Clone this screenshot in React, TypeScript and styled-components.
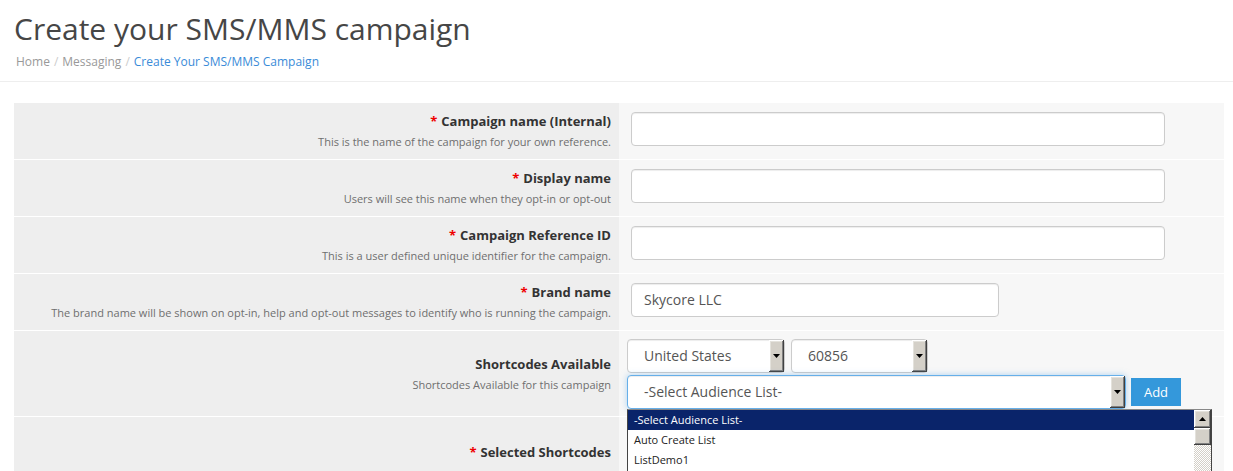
import styled, { createGlobalStyle } from "styled-components";

const GlobalStyle = createGlobalStyle`
  body {
    margin: 0;
    background: #fff;
    font-family: "Open Sans", "Liberation Sans", sans-serif;
    color: #333;
  }
`;

const Page = styled.div`
  width: 1233px;
  height: 471px;
  overflow: hidden;
`;

const Header = styled.div`
  padding: 12px 14px 11px;
  border-bottom: 1px solid #eee;
`;

const Title = styled.h1`
  margin: 0;
  font-size: 30px;
  line-height: 33px;
  font-weight: 400;
  color: #464646;
`;

const Crumbs = styled.div`
  margin-top: 8px;
  padding-left: 2px;
  font-size: 12px;
  line-height: 17px;
  color: #999;
`;

const Crumb = styled.span<{ $active?: boolean }>`
  color: ${(p) => (p.$active ? "#3a8bd8" : "#999")};
`;

const Sep = styled.span`
  color: #ccc;
  padding: 0 4px;
`;

const Form = styled.div`
  margin: 21px 9px 0 14px;
  width: 1210px;
`;

const Row = styled.div`
  display: grid;
  grid-template-columns: 605px 605px;
  border-bottom: 1px solid #fff;
`;

const LabelCell = styled.div<{ $height: number }>`
  min-height: ${(p) => p.$height}px;
  background: #eee;
  padding: 0 8px 0 0;
  display: flex;
  flex-direction: column;
  justify-content: center;
  align-items: flex-end;
  text-align: right;
`;

const Label = styled.div`
  font-size: 13px;
  line-height: 18px;
  font-weight: 700;
  color: #333;
`;

const Star = styled.span`
  color: #e00;
  margin-right: 4px;
`;

const Help = styled.div`
  margin-top: 4px;
  font-size: 11px;
  line-height: 16px;
  color: #6f6f6f;
`;

const FieldCell = styled.div<{ $pad?: string }>`
  background: #f7f7f7;
  padding: ${(p) => p.$pad ?? "9px 12px 13px"};
`;

const TextInput = styled.div<{ $width: number }>`
  box-sizing: border-box;
  width: ${(p) => p.$width}px;
  height: 34px;
  padding: 0 12px;
  background: #fff;
  border: 1px solid #ccc;
  border-radius: 4px;
  box-shadow: inset 0 1px 1px rgba(0, 0, 0, 0.075);
  font-size: 14px;
  line-height: 32px;
  color: #555;
`;

const Stack = styled.div`
  display: flex;
  flex-direction: column;
  gap: 2px;
`;

const Line = styled.div`
  display: flex;
  align-items: center;
  gap: 6px;
`;

const SelectWrap = styled.div`
  position: relative;
`;

const SelectBox = styled.div<{ $width: number; $height: number; $focus?: boolean }>`
  box-sizing: border-box;
  width: ${(p) => p.$width}px;
  height: ${(p) => p.$height}px;
  display: flex;
  background: #fff;
  border: 1px solid ${(p) => (p.$focus ? "#66afe9" : "#ccc")};
  border-radius: 4px;
  box-shadow: ${(p) =>
    p.$focus
      ? "inset 0 1px 1px rgba(0,0,0,.075), 0 0 6px rgba(102,175,233,.5)"
      : "inset 0 1px 1px rgba(0,0,0,.075)"};
`;

const SelectText = styled.div`
  flex: 1;
  padding-left: 16px;
  font-size: 14px;
  line-height: 31px;
  color: #555;
  white-space: nowrap;
`;

const Bevel = styled.div<{ $w: number }>`
  box-sizing: border-box;
  width: ${(p) => p.$w}px;
  flex: none;
  background: #d4d0c8;
  box-shadow: inset -1px -1px #404040, inset 1px 1px #fff,
    inset -2px -2px #808080, inset 2px 2px #e4e2dc;
  display: flex;
  align-items: center;
  justify-content: center;
`;

const AddButton = styled.button`
  margin-left: -1px;
  width: 50px;
  height: 28px;
  border: 0;
  border-radius: 0;
  background: #3498db;
  color: #fff;
  font-family: "Open Sans", "Liberation Sans", sans-serif;
  font-size: 13px;
  padding: 0;
`;

const ListBox = styled.div`
  position: absolute;
  top: 100%;
  left: 0;
  width: 585px;
  height: 80px;
  box-sizing: border-box;
  border: 1px solid #444;
  border-top-color: #888;
  background: #fff;
  display: flex;
  z-index: 2;
`;

const Options = styled.div`
  flex: 1;
`;

const Option = styled.div<{ $selected?: boolean }>`
  height: 20px;
  padding-left: 6px;
  font-size: 11px;
  line-height: 20px;
  color: ${(p) => (p.$selected ? "#fff" : "#222")};
  background: ${(p) => (p.$selected ? "#0a246a" : "transparent")};
`;

const ScrollBar = styled.div`
  width: 17px;
  display: flex;
  flex-direction: column;
  background: repeating-conic-gradient(#d4d0c8 0% 25%, #fff 0% 50%) 0 0 / 2px 2px;
`;

const ScrollPart = styled(Bevel)<{ $h: number }>`
  height: ${(p) => p.$h}px;
`;

const Arrow = ({ up }: { up?: boolean }) => (
  <svg width="7" height="4" viewBox="0 0 7 4">
    <path d={up ? "M3.5 0L7 4H0z" : "M0 0h7L3.5 4z"} fill="#000" />
  </svg>
);

type Select = { value: string; width: number; height: number; focus?: boolean };

const Dropdown = ({ value, width, height, focus }: Select) => (
  <SelectBox $width={width} $height={height} $focus={focus}>
    <SelectText>{value}</SelectText>
    <Bevel $w={15}>
      <Arrow />
    </Bevel>
  </SelectBox>
);

const fields = [
  {
    label: "Campaign name (Internal)",
    help: "This is the name of the campaign for your own reference.",
    width: 534,
    value: "",
  },
  {
    label: "Display name",
    help: "Users will see this name when they opt-in or opt-out",
    width: 534,
    value: "",
  },
  {
    label: "Campaign Reference ID",
    help: "This is a user defined unique identifier for the campaign.",
    width: 534,
    value: "",
  },
  {
    label: "Brand name",
    help: "The brand name will be shown on opt-in, help and opt-out messages to identify who is running the campaign.",
    width: 368,
    value: "Skycore LLC",
  },
];

const audiences = ["-Select Audience List-", "Auto Create List", "ListDemo1"];

export default function App() {
  return (
    <Page>
      <GlobalStyle />
      <Header>
        <Title>Create your SMS/MMS campaign</Title>
        <Crumbs>
          <Crumb>Home</Crumb>
          <Sep>/</Sep>
          <Crumb>Messaging</Crumb>
          <Sep>/</Sep>
          <Crumb $active>Create Your SMS/MMS Campaign</Crumb>
        </Crumbs>
      </Header>
      <Form>
        {fields.map((f) => (
          <Row key={f.label}>
            <LabelCell $height={56}>
              <Label>
                <Star>*</Star>
                {f.label}
              </Label>
              <Help>{f.help}</Help>
            </LabelCell>
            <FieldCell>
              <TextInput $width={f.width}>{f.value}</TextInput>
            </FieldCell>
          </Row>
        ))}
        <Row>
          <LabelCell $height={85}>
            <Label>Shortcodes Available</Label>
            <Help>Shortcodes Available for this campaign</Help>
          </LabelCell>
          <FieldCell $pad="8px 12px 7px 8px">
            <Stack>
              <Line>
                <Dropdown value="United States" width={158} height={34} />
                <Dropdown value="60856" width={137} height={34} />
              </Line>
              <Line>
                <SelectWrap>
                  <Dropdown value="-Select Audience List-" width={499} height={34} focus />
                  <ListBox>
                    <Options>
                      {audiences.map((a, i) => (
                        <Option key={a} $selected={i === 0}>
                          {a}
                        </Option>
                      ))}
                    </Options>
                    <ScrollBar>
                      <ScrollPart $w={17} $h={18}>
                        <Arrow up />
                      </ScrollPart>
                      <ScrollPart $w={17} $h={17} />
                    </ScrollBar>
                  </ListBox>
                </SelectWrap>
                <AddButton>Add</AddButton>
              </Line>
            </Stack>
          </FieldCell>
        </Row>
        <Row>
          <LabelCell $height={70}>
            <Label>
              <Star>*</Star>
              Selected Shortcodes
            </Label>
          </LabelCell>
          <FieldCell />
        </Row>
      </Form>
    </Page>
  );
}
